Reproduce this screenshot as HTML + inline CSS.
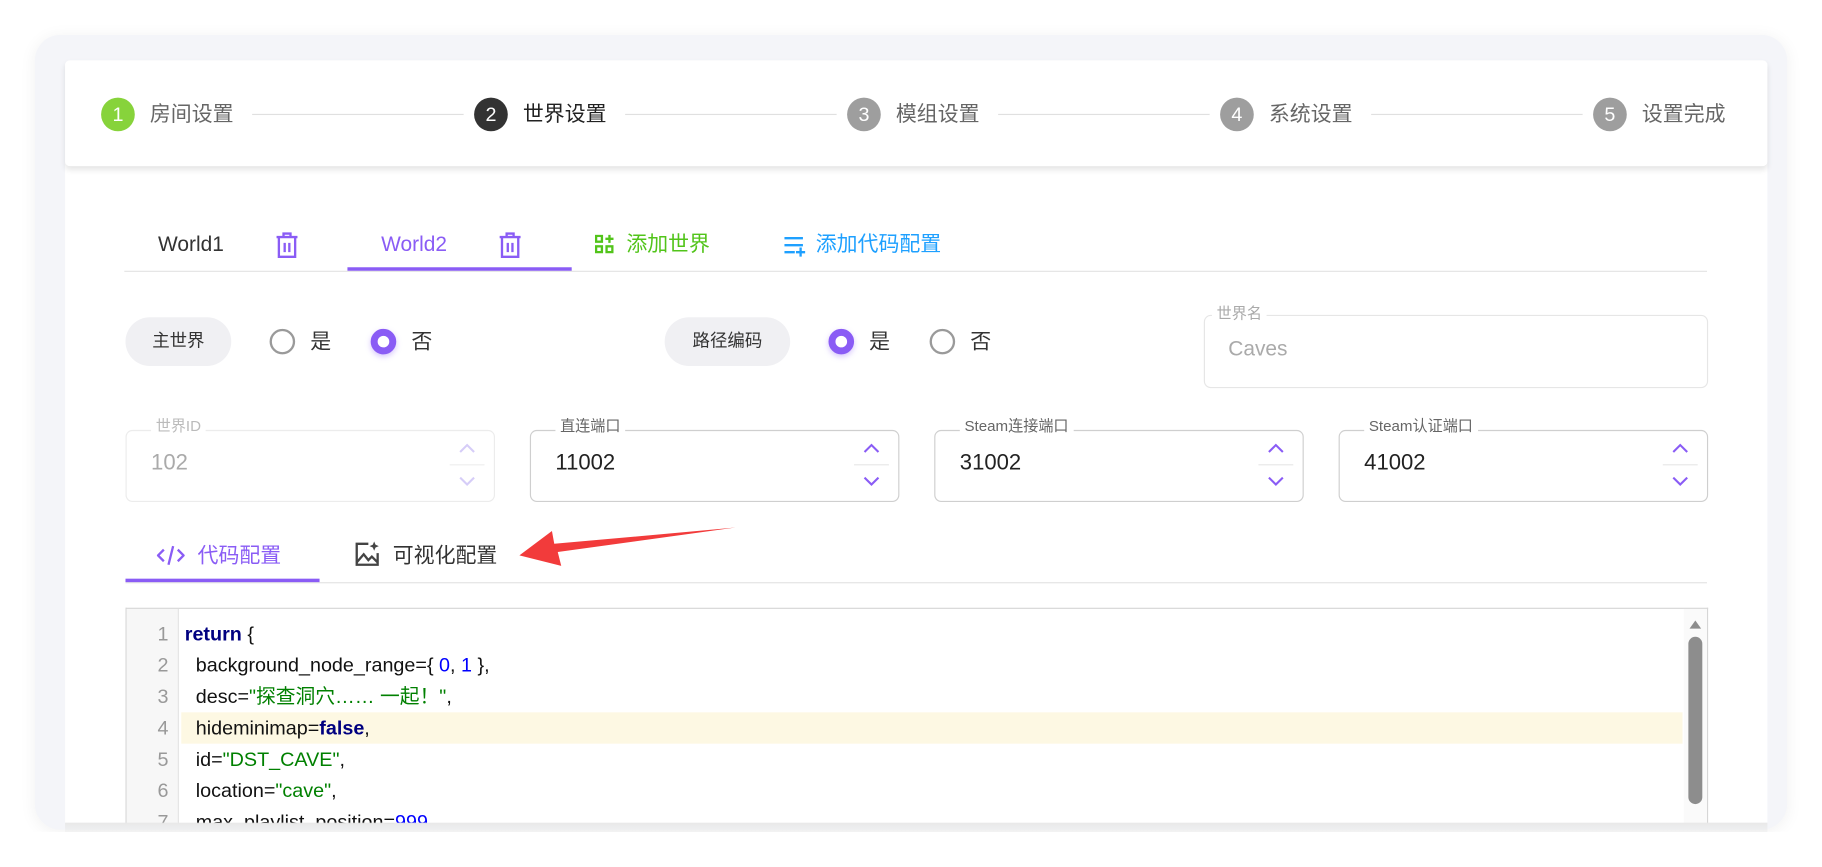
<!DOCTYPE html>
<html><head><meta charset="utf-8"><style>
html,body{margin:0;padding:0;width:1822px;height:859px;overflow:hidden;background:#fff;}
#wrap{position:absolute;left:0;top:0;width:1568px;height:739px;transform:scale(1.16199);transform-origin:0 0;font-family:"Liberation Sans","Noto Sans CJK SC",sans-serif;}
.abs{position:absolute;}
.outer{left:30px;top:30px;width:1508px;height:684px;background:#f4f5f9;border-radius:22px;box-shadow:0 2px 14px rgba(0,0,0,0.06);}
.card{left:56px;top:52px;width:1465px;height:656px;background:#fff;border-radius:4px 4px 0 0;}
.stepbar{left:56px;top:52px;width:1465px;height:91px;background:#fff;border-radius:4px;box-shadow:0 3px 5px rgba(0,0,0,0.10);}
.circ{width:29px;height:29px;border-radius:50%;color:#fff;font-size:17px;line-height:29px;text-align:center;top:84px;}
.slab{top:86px;font-size:18px;color:#666;line-height:24px;}
.sline{top:98px;height:1px;background:#e0e0e0;}
.t18{font-size:18px;line-height:24px;}
.pill{top:273px;height:42px;background:#f0f0f3;border-radius:21px;font-size:15px;line-height:42px;text-align:center;color:#333;}
.radio{top:283px;width:18px;height:18px;border-radius:50%;border:2px solid #9a9a9a;}
.radio.on{border:6px solid #8a5cf5;width:10px;height:10px;background:#fff;box-shadow:0 2px 5px rgba(138,92,245,.35);}
.rl{top:283px;font-size:18px;line-height:22px;color:#333;}
.fld{border:1px solid #dcdcdc;border-radius:6px;}
.flab{font-size:13px;color:#666;background:#fff;padding:0 4px;line-height:14px;}
.num{font-size:19px;color:#222;}
.spin{width:32px;height:60px;}
.code{font-size:17px;line-height:27px;color:#111;white-space:pre;}
.ln{width:36px;text-align:right;color:#999;font-size:17px;line-height:27px;}
</style></head><body><div id="wrap">
<div class="abs outer"></div>
<div class="abs card"></div>
<div class="abs stepbar"></div>

<div class="abs circ" style="left:87px;background:#87d33b">1</div>
<div class="abs slab" style="left:129px">房间设置</div>
<div class="abs sline" style="left:217px;width:182px"></div>
<div class="abs circ" style="left:408px;background:#333">2</div>
<div class="abs slab" style="left:450px;color:#222">世界设置</div>
<div class="abs sline" style="left:538px;width:182px"></div>
<div class="abs circ" style="left:729px;background:#9e9e9e">3</div>
<div class="abs slab" style="left:771px">模组设置</div>
<div class="abs sline" style="left:859px;width:182px"></div>
<div class="abs circ" style="left:1050px;background:#9e9e9e">4</div>
<div class="abs slab" style="left:1092px">系统设置</div>
<div class="abs sline" style="left:1180px;width:182px"></div>
<div class="abs circ" style="left:1371px;background:#9e9e9e">5</div>
<div class="abs slab" style="left:1413px">设置完成</div>

<!-- world tabs -->
<div class="abs t18" style="left:136px;top:198px;color:#333">World1</div>
<svg class="abs" style="left:236px;top:199px" width="22" height="24" viewBox="0 0 22 24"><g fill="none" stroke="#8a5cf5" stroke-width="2"><path d="M2 5h18M8 5V2h6v3M4 5v17h14V5M9 10v8M13 10v8"/></g></svg>
<div class="abs t18" style="left:328px;top:198px;color:#8a5cf5">World2</div>
<svg class="abs" style="left:428px;top:199px" width="22" height="24" viewBox="0 0 22 24"><g fill="none" stroke="#8a5cf5" stroke-width="2"><path d="M2 5h18M8 5V2h6v3M4 5v17h14V5M9 10v8M13 10v8"/></g></svg>
<div class="abs" style="left:107px;top:233px;width:1362px;height:1px;background:#e3e3e3"></div>
<div class="abs" style="left:299px;top:230px;width:193px;height:3px;background:#8a5cf5"></div>
<svg class="abs" style="left:512px;top:202px" width="16" height="16" viewBox="0 0 16 16"><g fill="none" stroke="#52c41a" stroke-width="2"><rect x="1" y="1" width="5" height="5"/><rect x="1" y="10" width="5" height="5"/><rect x="10" y="10" width="5" height="5"/><path d="M12.5 0v7M9 3.5h7"/></g></svg>
<div class="abs t18" style="left:539px;top:198px;color:#52c41a">添加世界</div>
<svg class="abs" style="left:675px;top:203px" width="18" height="18" viewBox="0 0 18 18"><g fill="none" stroke="#1ea0ff" stroke-width="2"><path d="M0 2h16M0 8h16M0 14h9M14 10v8M10 14h8"/></g></svg>
<div class="abs t18" style="left:702px;top:198px;color:#1ea0ff">添加代码配置</div>

<!-- radios -->
<div class="abs pill" style="left:108px;width:91px">主世界</div>
<div class="abs radio" style="left:232px"></div><div class="abs rl" style="left:267px">是</div>
<div class="abs radio on" style="left:319px"></div><div class="abs rl" style="left:354px">否</div>
<div class="abs pill" style="left:572px;width:108px">路径编码</div>
<div class="abs radio on" style="left:713px"></div><div class="abs rl" style="left:748px">是</div>
<div class="abs radio" style="left:800px"></div><div class="abs rl" style="left:835px">否</div>

<div class="abs fld" style="left:1036px;top:271px;width:432px;height:61px;border-color:#e6e6e6"></div>
<div class="abs flab" style="left:1043px;top:263px;color:#aaa">世界名</div>
<div class="abs" style="left:1057px;top:290px;font-size:18px;color:#aaa">Caves</div>

<!-- number fields -->
<div class="abs fld" style="left:108px;top:370px;width:316px;height:60px;border-color:#ececec"></div>
<div class="abs flab" style="left:130px;top:360px;color:#bbb">世界ID</div>
<div class="abs num" style="left:130px;top:388px;color:#aaa">102</div>
<div class="abs fld" style="left:456px;top:370px;width:316px;height:60px;border-color:#cfcfcf"></div>
<div class="abs flab" style="left:478px;top:360px">直连端口</div>
<div class="abs num" style="left:478px;top:388px">11002</div>
<div class="abs fld" style="left:804px;top:370px;width:316px;height:60px;border-color:#cfcfcf"></div>
<div class="abs flab" style="left:826px;top:360px">Steam连接端口</div>
<div class="abs num" style="left:826px;top:388px">31002</div>
<div class="abs fld" style="left:1152px;top:370px;width:316px;height:60px;border-color:#cfcfcf"></div>
<div class="abs flab" style="left:1174px;top:360px">Steam认证端口</div>
<div class="abs num" style="left:1174px;top:388px">41002</div>

<svg class="abs spin" style="left:386px;top:370px" viewBox="0 0 32 60"><path d="M1 30h30" stroke="#eee"/><path d="M10 19l6-6 6 6M10 41l6 6 6-6" fill="none" stroke="#d6cdf8" stroke-width="1.8"/></svg>
<svg class="abs spin" style="left:734px;top:370px" viewBox="0 0 32 60"><path d="M1 30h30" stroke="#e6e6e6"/><path d="M10 19l6-6 6 6M10 41l6 6 6-6" fill="none" stroke="#8a5cf5" stroke-width="1.8"/></svg>
<svg class="abs spin" style="left:1082px;top:370px" viewBox="0 0 32 60"><path d="M1 30h30" stroke="#e6e6e6"/><path d="M10 19l6-6 6 6M10 41l6 6 6-6" fill="none" stroke="#8a5cf5" stroke-width="1.8"/></svg>
<svg class="abs spin" style="left:1430px;top:370px" viewBox="0 0 32 60"><path d="M1 30h30" stroke="#e6e6e6"/><path d="M10 19l6-6 6 6M10 41l6 6 6-6" fill="none" stroke="#8a5cf5" stroke-width="1.8"/></svg>

<!-- code tabs -->
<svg class="abs" style="left:135px;top:468px" width="24" height="20" viewBox="0 0 24 20"><g fill="none" stroke="#8a5cf5" stroke-width="2"><path d="M6 5l-5 5 5 5M18 5l5 5-5 5M14 2l-4 16"/></g></svg>
<div class="abs t18" style="left:170px;top:466px;color:#8a5cf5">代码配置</div>
<svg class="abs" style="left:305px;top:466px" width="22" height="22" viewBox="0 0 22 22"><g fill="none" stroke="#444" stroke-width="2"><path d="M12 2H2v18h18V10"/><path d="M2 18l6-7 4 5 3-3 5 5"/></g><path d="M17 0l1.2 2.8L21 4l-2.8 1.2L17 8l-1.2-2.8L13 4l2.8-1.2z" fill="#444"/></svg>
<div class="abs t18" style="left:338px;top:466px;color:#333">可视化配置</div>
<div class="abs" style="left:108px;top:501px;width:1361px;height:1px;background:#e3e3e3"></div>
<div class="abs" style="left:108px;top:498px;width:167px;height:3px;background:#8a5cf5"></div>
<svg class="abs" style="left:440px;top:450px" width="200" height="45" viewBox="0 0 200 45"><path d="M193 4L40 25 43 37 7 28 35 7 37 18z" fill="#f23b3b"/></svg>

<!-- editor -->
<div class="abs" style="left:108px;top:523px;width:1360px;height:185px;border:1px solid #d6d6d6;border-bottom:none;overflow:hidden;background:#fff">
  <div class="abs" style="left:0;top:0;width:44px;height:200px;background:#f7f7f7;border-right:1px solid #e5e5e5"></div>
  <div class="abs" style="left:47px;top:89px;width:1292px;height:27px;background:#fdf8e3"></div>
  <div class="abs" style="left:1340px;top:0;width:20px;height:200px;background:#fafafa"></div>
  <svg class="abs" style="left:1343px;top:8px" width="14" height="10"><path d="M2 9l5-7 5 7z" fill="#8d8d8d"/></svg>
  <div class="abs" style="left:1344px;top:24px;width:12px;height:144px;border-radius:6px;background:#8d8d8d"></div>
  <div class="abs" style="left:0;top:8px">
    <div class="ln">1</div><div class="ln">2</div><div class="ln">3</div><div class="ln">4</div><div class="ln">5</div><div class="ln">6</div><div class="ln">7</div>
  </div>
  <div class="abs code" style="left:50px;top:8px"><b style="color:#000080">return</b> {
  background_node_range={ <span style="color:#0000ff">0</span>, <span style="color:#0000ff">1</span> },
  desc=<span style="color:#008000">"探查洞穴…… 一起！"</span>,
  hideminimap=<b style="color:#000080">false</b>,
  id=<span style="color:#008000">"DST_CAVE"</span>,
  location=<span style="color:#008000">"cave"</span>,
  max_playlist_position=<span style="color:#0000ff">999</span>,</div>
</div>
<div class="abs" style="left:56px;top:708px;width:1465px;height:12px;background:linear-gradient(#e8e8e8,rgba(255,255,255,0))"></div>
<div class="abs" style="left:0;top:716px;width:1568px;height:30px;background:#fff"></div>
</div></body></html>
